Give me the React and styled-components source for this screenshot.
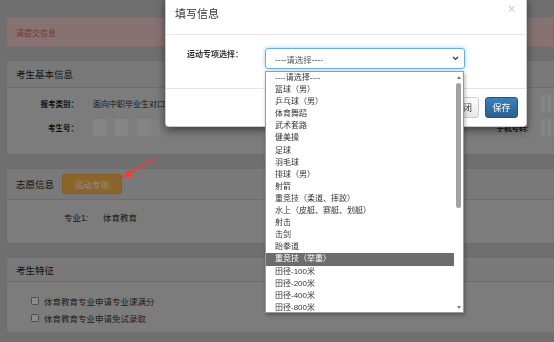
import React from 'react';
import styled, { createGlobalStyle } from 'styled-components';

const Global = createGlobalStyle`
  html, body { margin: 0; padding: 0; overflow: hidden; background: #cbcbcb; }
  body { font-family: "Liberation Sans", "Noto Sans CJK SC", sans-serif; color: #333; }
  * { box-sizing: border-box; }
`;

const Page = styled.div`
  display: flex;
  flex-direction: column;
  gap: 13px;
  padding: 17px 0 0 6px;
  width: 554px;
`;

const Alert = styled.div`
  height: 30px;
  display: flex;
  align-items: center;
  padding-left: 9px;
  background: #f6d0d0;
  border: 1px solid #ebc2c4;
  border-radius: 3px 0 0 3px;
  color: #d86464;
  font-size: 8px;
`;

const Panel = styled.section`
  background: #e2e2e2;
  border: 1px solid #c8c8c8;
  border-right: none;
  border-radius: 3px 0 0 3px;
`;

const PanelHeader = styled.header`
  display: flex;
  align-items: center;
  gap: 8px;
  min-height: ${p => p.$h}px;
  padding: ${p => (p.$tall ? '5px 9px' : '0 9px')};
  background: #dcdcdc;
  border-bottom: 1px solid #c8c8c8;
  font-size: 9.5px;
  color: #1e1e1e;
`;

const WarnButton = styled.button`
  height: 20px;
  padding: 0 12px;
  background: #ffb850;
  border: 1px solid #efa640;
  border-radius: 3px;
  color: #fff;
  font-family: inherit;
  font-size: 8.5px;
`;

const InfoGrid = styled.div`
  display: grid;
  grid-template-columns: 86px 395px 53px 1fr;
  grid-auto-rows: 24px;
  align-items: center;
  padding: 3px 0 15px;
`;

const Label = styled.div`
  text-align: right;
  padding-right: ${p => p.$pr ?? 15}px;
  font-size: 7.5px;
  font-weight: bold;
  color: #1e1e1e;
  white-space: nowrap;
`;

const Value = styled.div`
  font-size: 8px;
  color: #2e2e2e;
  white-space: nowrap;
  overflow: hidden;
`;

const Mosaic = styled.div`
  width: ${p => p.$w}px;
  height: 17px;
  background:
    linear-gradient(90deg, #eef2f4 0 20%, #e4e9ec 20% 33%, #f1f4f6 33% 52%, #e2e7ea 52% 66%, #eef1f3 66% 84%, #e6eaed 84% 100%);
`;

const MajorRow = styled.div`
  display: grid;
  grid-template-columns: 96px 1fr;
  align-items: center;
  height: 17px;
  font-size: 8.5px;
  color: #2e2e2e;
`;

const MajorLabel = styled.div`
  text-align: right;
  padding-right: 15px;
`;

const Body = styled.div`
  padding: ${p => p.$pad};
`;

const CheckRow = styled.label`
  display: flex;
  align-items: center;
  gap: 5px;
  height: 17px;
  font-size: 8.5px;
  color: #3a3a3a;
`;

const Box = styled.span`
  width: 8px;
  height: 8px;
  border: 1px solid #8a8a8a;
  border-radius: 1.5px;
  background: #fff;
`;

const Overlay = styled.div`
  position: fixed;
  inset: 0;
  background: rgba(0, 0, 0, 0.45);
`;

const Modal = styled.div`
  position: absolute;
  left: 165px;
  top: -4px;
  width: 362px;
  background: #fff;
  border: 1px solid rgba(0, 0, 0, 0.2);
  border-radius: 4px;
  box-shadow: 0 3px 9px rgba(0, 0, 0, 0.5);
`;

const ModalHeader = styled.div`
  display: flex;
  justify-content: space-between;
  align-items: center;
  height: 38px;
  padding: 0 10px 6px 9px;
  border-bottom: 1px solid #e5e5e5;
`;

const Title = styled.h4`
  margin: 0;
  font-size: 11px;
  font-weight: normal;
  color: #333;
`;

const Close = styled.span`
  align-self: flex-start;
  margin-top: 6px;
  font-size: 10px;
  color: #c4c4c4;
  font-family: "DejaVu Sans", sans-serif;
`;

const ModalBody = styled.div`
  display: flex;
  height: 53px;
  padding: 13px 0 0 21px;
`;

const FieldLabel = styled.label`
  width: 78px;
  padding-top: 2px;
  font-size: 8px;
  line-height: 10px;
  font-weight: bold;
  color: #333;
`;

const SelectWrap = styled.div`
  position: relative;
  width: 200px;
`;

const SelectBox = styled.div`
  height: 21px;
  display: flex;
  align-items: center;
  justify-content: space-between;
  padding: 0 5px 0 9px;
  border: 1px solid #66afe9;
  border-radius: 3px;
  box-shadow: 0 0 4px rgba(102, 175, 233, 0.6);
  font-size: 8.5px;
  color: #555;
`;

const List = styled.div`
  position: absolute;
  left: 0;
  top: 23px;
  width: 199px;
  height: 242px;
  display: flex;
  background: #fff;
  border: 1px solid #9a9a9a;
  box-shadow: 1px 2px 4px rgba(0, 0, 0, 0.3);
  z-index: 3;
`;

const Options = styled.div`
  flex: 1;
  overflow: hidden;
`;

const Option = styled.div`
  height: 12.1px;
  line-height: 12.1px;
  padding-left: 9px;
  font-size: 8px;
  white-space: nowrap;
  color: ${p => (p.$active ? '#fff' : '#333')};
  background: ${p => (p.$active ? '#6c6c6c' : 'transparent')};
`;

const Track = styled.div`
  width: 9px;
  display: flex;
  flex-direction: column;
  align-items: center;
  background: #fff;
`;

const ArrowBox = styled.div`
  height: 10px;
  display: flex;
  align-items: center;
  justify-content: center;
  &::after {
    content: '';
    border-left: 2.5px solid transparent;
    border-right: 2.5px solid transparent;
    ${p => (p.$down ? 'border-top: 3px solid #7a7a7a;' : 'border-bottom: 3px solid #7a7a7a;')}
  }
`;

const Thumb = styled.div`
  width: 5px;
  height: 125px;
  margin-top: 1px;
  border-radius: 3px;
  background: #a2a2a2;
`;

const Spacer = styled.div`
  flex: 1;
`;

const ModalFooter = styled.div`
  display: flex;
  justify-content: flex-end;
  gap: 6px;
  padding: 8px 8px 8px;
  border-top: 1px solid #e5e5e5;
`;

const Btn = styled.button`
  width: ${p => p.$w}px;
  height: 21px;
  padding: 0;
  border-radius: 3px;
  font-family: inherit;
  font-size: 9px;
  border: 1px solid ${p => (p.$primary ? '#245580' : '#ccc')};
  color: ${p => (p.$primary ? '#fff' : '#333')};
  background: ${p => (p.$primary ? 'linear-gradient(#3a80bd, #2a5f90)' : 'linear-gradient(#fff, #e6e6e6)')};
`;

const ArrowSvg = styled.svg`
  position: absolute;
  left: 0;
  top: 0;
  pointer-events: none;
`;

const options = [
  '----请选择----', '篮球（男）', '乒乓球（男）', '体育舞蹈', '武术套路', '健美操', '足球', '羽毛球',
  '排球（男）', '射箭', '重竞技（柔道、摔跤）', '水上（皮艇、赛艇、划艇）', '射击', '击剑', '跆拳道',
  '重竞技（举重）', '田径-100米', '田径-200米', '田径-400米', '田径-800米',
];

export default function App() {
  return (
    <>
      <Global />
      <Page>
        <Alert>请提交信息</Alert>
        <Panel>
          <PanelHeader $h={27}>考生基本信息</PanelHeader>
          <InfoGrid>
            <Label>报考类别：</Label>
            <Value>面向中职毕业生对口招生</Value>
            <div />
            <Mosaic $w={20} />
            <Label>考生号：</Label>
            <Mosaic $w={67} />
            <Label $pr={12}>手机号码:</Label>
            <Mosaic $w={20} />
          </InfoGrid>
        </Panel>
        <Panel>
          <PanelHeader $tall>
            志愿信息
            <WarnButton>运动专项</WarnButton>
          </PanelHeader>
          <Body $pad="8px 0 18px">
            <MajorRow>
              <MajorLabel>专业1:</MajorLabel>
              <div>体育教育</div>
            </MajorRow>
          </Body>
        </Panel>
        <Panel>
          <PanelHeader $h={24}>考生特征</PanelHeader>
          <Body $pad="10px 0 6px 24px">
            <CheckRow><Box />体育教育专业申请专业课满分</CheckRow>
            <CheckRow><Box />体育教育专业申请免试录取</CheckRow>
          </Body>
        </Panel>
      </Page>
      <Overlay />
      <ArrowSvg width="554" height="342" viewBox="0 0 554 342">
        <line x1="155" y1="158.5" x2="129" y2="173.5" stroke="#e8403c" strokeWidth="2" strokeLinecap="round" />
        <polygon points="122,178 133,176.5 128.5,168.5" fill="#e8403c" />
      </ArrowSvg>
      <Modal>
        <ModalHeader>
          <Title>填写信息</Title>
          <Close>×</Close>
        </ModalHeader>
        <ModalBody>
          <FieldLabel>运动专项选择：</FieldLabel>
          <SelectWrap>
            <SelectBox>
              ----请选择----
              <svg width="7" height="5" viewBox="0 0 7 5">
                <path d="M1 1 L3.5 3.5 L6 1" fill="none" stroke="#333" strokeWidth="1.2" />
              </svg>
            </SelectBox>
            <List>
              <Options>
                {options.map((o, i) => (
                  <Option key={o} $active={i === 15}>{o}</Option>
                ))}
              </Options>
              <Track>
                <ArrowBox />
                <Thumb />
                <Spacer />
                <ArrowBox $down />
              </Track>
            </List>
          </SelectWrap>
        </ModalBody>
        <ModalFooter>
          <Btn $w={32}>关闭</Btn>
          <Btn $w={33} $primary>保存</Btn>
        </ModalFooter>
      </Modal>
    </>
  );
}
